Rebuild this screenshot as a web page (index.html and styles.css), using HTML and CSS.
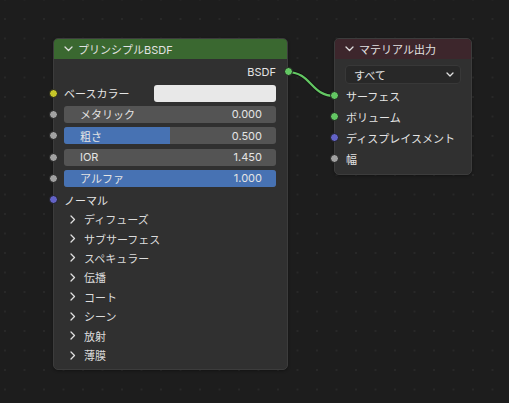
FILE: index.html
```html
<!DOCTYPE html>
<html lang="ja">
<head>
<meta charset="utf-8">
<link rel="stylesheet" href="styles.css">
</head>
<body>
<div class="canvas">
  <svg class="links" width="509" height="403" viewBox="0 0 509 403">
    <path class="link-shadow" d="M287,72 C312,72 310,96 335,96"/>
    <path class="link" d="M287,72 C312,72 310,96 335,96"/>
  </svg>

  <div class="node node-bsdf">
    <div class="header header-green">
      <svg class="chev" width="9" height="6" viewBox="0 0 9 6"><path d="M1,1 L4.5,4.5 L8,1"/></svg>
      <span>プリンシプルBSDF</span>
    </div>
    <div class="body">
      <div class="row row-out">
        <span>BSDF</span>
        <i class="sock sock-out green"></i>
      </div>
      <div class="row">
        <i class="sock sock-in yellow"></i>
        <span class="lbl">ベースカラー</span>
        <div class="swatch"></div>
      </div>
      <div class="row">
        <i class="sock sock-in gray"></i>
        <div class="field"><span>メタリック</span><span>0.000</span></div>
      </div>
      <div class="row">
        <i class="sock sock-in gray"></i>
        <div class="field"><div class="fill" style="width:50%"></div><span>粗さ</span><span>0.500</span></div>
      </div>
      <div class="row">
        <i class="sock sock-in gray"></i>
        <div class="field"><span>IOR</span><span>1.450</span></div>
      </div>
      <div class="row">
        <i class="sock sock-in gray"></i>
        <div class="field"><div class="fill" style="width:100%"></div><span>アルファ</span><span>1.000</span></div>
      </div>
      <div class="row">
        <i class="sock sock-in purple"></i>
        <span class="lbl">ノーマル</span>
      </div>
      <div class="panels">
        <div class="panel"><svg class="chev-r" width="6" height="9" viewBox="0 0 6 9"><path d="M1,1 L4.5,4.5 L1,8"/></svg><span>ディフューズ</span></div>
        <div class="panel"><svg class="chev-r" width="6" height="9" viewBox="0 0 6 9"><path d="M1,1 L4.5,4.5 L1,8"/></svg><span>サブサーフェス</span></div>
        <div class="panel"><svg class="chev-r" width="6" height="9" viewBox="0 0 6 9"><path d="M1,1 L4.5,4.5 L1,8"/></svg><span>スペキュラー</span></div>
        <div class="panel"><svg class="chev-r" width="6" height="9" viewBox="0 0 6 9"><path d="M1,1 L4.5,4.5 L1,8"/></svg><span>伝播</span></div>
        <div class="panel"><svg class="chev-r" width="6" height="9" viewBox="0 0 6 9"><path d="M1,1 L4.5,4.5 L1,8"/></svg><span>コート</span></div>
        <div class="panel"><svg class="chev-r" width="6" height="9" viewBox="0 0 6 9"><path d="M1,1 L4.5,4.5 L1,8"/></svg><span>シーン</span></div>
        <div class="panel"><svg class="chev-r" width="6" height="9" viewBox="0 0 6 9"><path d="M1,1 L4.5,4.5 L1,8"/></svg><span>放射</span></div>
        <div class="panel"><svg class="chev-r" width="6" height="9" viewBox="0 0 6 9"><path d="M1,1 L4.5,4.5 L1,8"/></svg><span>薄膜</span></div>
      </div>
    </div>
  </div>

  <div class="node node-out">
    <div class="header header-red">
      <svg class="chev" width="9" height="6" viewBox="0 0 9 6"><path d="M1,1 L4.5,4.5 L8,1"/></svg>
      <span>マテリアル出力</span>
    </div>
    <div class="body body-out">
      <div class="dropdown">
        <span>すべて</span>
        <svg class="chev-s" width="8" height="5" viewBox="0 0 8 5"><path d="M1,1 L4,4 L7,1"/></svg>
      </div>
      <div class="row">
        <i class="sock sock-in green"></i>
        <span class="lbl">サーフェス</span>
      </div>
      <div class="row">
        <i class="sock sock-in green"></i>
        <span class="lbl">ボリューム</span>
      </div>
      <div class="row">
        <i class="sock sock-in purple"></i>
        <span class="lbl">ディスプレイスメント</span>
      </div>
      <div class="row">
        <i class="sock sock-in gray"></i>
        <span class="lbl">幅</span>
      </div>
    </div>
  </div>
</div>
</body>
</html>
```

FILE: styles.css
```css
* { box-sizing: border-box; }
html, body {
  margin: 0;
  padding: 0;
  width: 509px;
  height: 403px;
  overflow: hidden;
}
body {
  background-color: #1d1d1d;
  font-family: Inter, "Noto Sans CJK JP", sans-serif;
  font-size: 11px;
  color: #e4e4e4;
}
.canvas {
  position: relative;
  width: 509px;
  height: 403px;
  background-image: radial-gradient(circle, #282828 0.9px, transparent 1.3px);
  background-size: 19.5px 19.5px;
  background-position: -4.75px 9.25px;
}
.links {
  position: absolute;
  left: 0;
  top: 0;
  z-index: 2;
  pointer-events: none;
}
.link-shadow {
  fill: none;
  stroke: rgba(0,0,0,0.35);
  stroke-width: 4;
}
.link {
  fill: none;
  stroke: #63c763;
  stroke-width: 2.2;
}
.node {
  position: absolute;
  background: #303030;
  border: 1px solid #3c3c3c;
  border-radius: 5px;
  box-shadow: 0 1px 3px rgba(0,0,0,0.35);
}
.node-bsdf {
  left: 53px;
  top: 38px;
  width: 235px;
  height: 332px;
}
.node-out {
  left: 334px;
  top: 38px;
  width: 138px;
  height: 137px;
}
.header {
  height: 20px;
  border-radius: 4px 4px 0 0;
  display: flex;
  align-items: center;
  padding-left: 10px;
  gap: 5px;
  color: #e2e2e2;
}
.header-green { background: #3a6830; }
.header-red { background: #3d262c; }
.chev path, .chev-r path, .chev-s path {
  fill: none;
  stroke: #e0e0e0;
  stroke-width: 1.3;
  stroke-linecap: round;
  stroke-linejoin: round;
}
.body {
  position: relative;
  display: flex;
  flex-direction: column;
  padding-top: 2px;
}
.row {
  position: relative;
  height: 21.35px;
  display: flex;
  align-items: center;
  padding-left: 10px;
  padding-right: 11px;
}
.row-out {
  justify-content: flex-end;
}
.lbl {
  flex: 0 0 auto;
}
.sock {
  position: absolute;
  top: 50%;
  width: 9px;
  height: 9px;
  margin-top: -4.5px;
  border-radius: 50%;
  border: 1px solid #1e1e1e;
  z-index: 3;
}
.sock-in { left: -5.5px; }
.sock-out { right: -5.5px; }
.yellow { background: #c7c729; }
.gray { background: #a1a1a1; }
.purple { background: #6363c7; }
.green { background: #63c763; }
.swatch {
  margin-left: auto;
  width: 122px;
  height: 17px;
  background: #e8e8e8;
  border-radius: 3px;
}
.field {
  position: relative;
  flex: 1;
  height: 17px;
  background: #545454;
  border-radius: 3px;
  overflow: hidden;
  display: flex;
  align-items: center;
  justify-content: space-between;
  padding: 0 14px 0 16px;
}
.field span { position: relative; }
.fill {
  position: absolute;
  left: 0;
  top: 0;
  bottom: 0;
  background: #4772b3;
}
.panels {
  display: flex;
  flex-direction: column;
  margin-top: -1px;
}
.panel {
  height: 19.43px;
  display: flex;
  align-items: center;
  padding-left: 16px;
  gap: 8px;
  color: #dcdcdc;
}
.body-out {
  padding-top: 6px;
}
.dropdown {
  margin: 0 10px 1px 10px;
  height: 19px;
  background: #282828;
  border: 1px solid #383838;
  border-radius: 4px;
  display: flex;
  align-items: center;
  justify-content: space-between;
  padding: 0 6px 0 8px;
}
.body-out .row {
  height: 21px;
  padding-left: 11px;
}
```
